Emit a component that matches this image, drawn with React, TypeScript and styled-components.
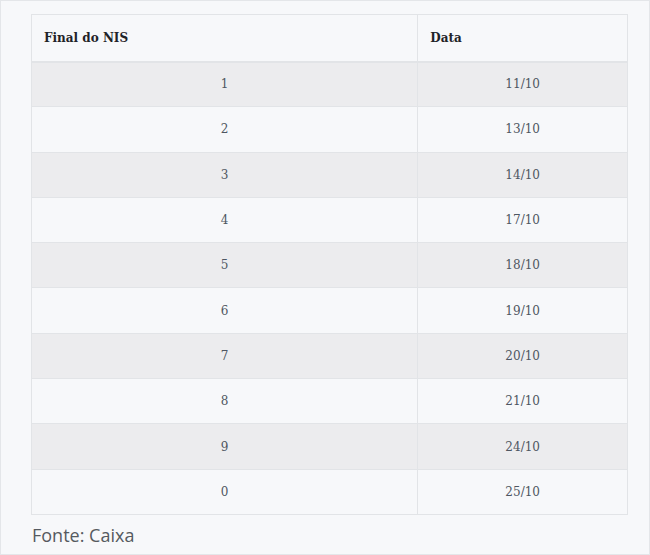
import React from "react";
import styled, { createGlobalStyle } from "styled-components";

const Global = createGlobalStyle`
  html, body { margin: 0; padding: 0; background: #f7f8fa; }
`;

const Frame = styled.div`
  box-sizing: border-box;
  width: 650px;
  height: 555px;
  border: 1px solid #e4e6e9;
  background: #f7f8fa;
  padding: 13px 21px 0 30px;
`;

const Table = styled.table`
  width: 597px;
  border-collapse: collapse;
  font-family: "DejaVu Serif", "Liberation Serif", serif;
  font-size: 12px;
`;

const HeadCell = styled.th<{ $w: number }>`
  box-sizing: border-box;
  height: 47px;
  padding: 0 12px;
  text-align: left;
  font-weight: 700;
  color: #1f2328;
  background: #f7f8fa;
  border: 1px solid #e2e4e7;
  border-bottom: 2px solid #e2e4e7;
  width: ${(p) => p.$w}px;
`;

const Row = styled.tr<{ $shade: boolean }>`
  background: ${(p) => (p.$shade ? "#ececee" : "#f7f8fa")};
`;

const Cell = styled.td`
  box-sizing: border-box;
  height: 45.3px;
  padding: 0 12px;
  text-align: center;
  color: #4e5661;
  border: 1px solid #e2e4e7;
`;

const Source = styled.p`
  margin: 8px 0 0 1px;
  font-family: "Open Sans", "Noto Sans", sans-serif;
  font-size: 18px;
  color: #555a60;
`;

const rows: [string, string][] = [
  ["1", "11/10"],
  ["2", "13/10"],
  ["3", "14/10"],
  ["4", "17/10"],
  ["5", "18/10"],
  ["6", "19/10"],
  ["7", "20/10"],
  ["8", "21/10"],
  ["9", "24/10"],
  ["0", "25/10"],
];

export default function App() {
  return (
    <>
      <Global />
      <Frame>
        <Table>
          <thead>
            <tr>
              <HeadCell $w={387}>Final do NIS</HeadCell>
              <HeadCell $w={210}>Data</HeadCell>
            </tr>
          </thead>
          <tbody>
            {rows.map(([n, d], i) => (
              <Row key={n} $shade={i % 2 === 0}>
                <Cell>{n}</Cell>
                <Cell>{d}</Cell>
              </Row>
            ))}
          </tbody>
        </Table>
        <Source>Fonte: Caixa</Source>
      </Frame>
    </>
  );
}
